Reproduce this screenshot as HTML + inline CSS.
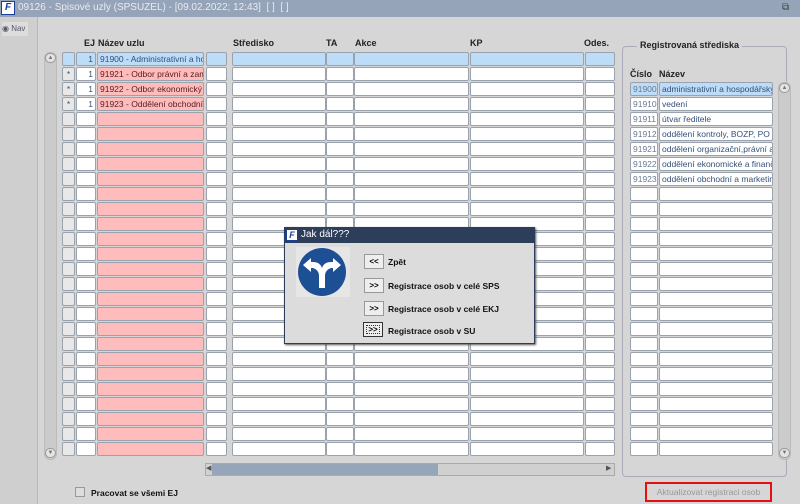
<!DOCTYPE html>
<html><head><meta charset="utf-8"><style>
*{margin:0;padding:0;box-sizing:border-box}
body{width:800px;height:504px;overflow:hidden;background:#d6d6d6;font-family:"Liberation Sans",sans-serif;font-size:9px;position:relative}
.a{position:absolute}
.c{position:absolute;height:14px;border:1px solid #9aa3ad;border-radius:2px;background:#fff;overflow:hidden;white-space:nowrap;line-height:12px;padding:0 2px;color:#34507a;font-size:8.5px}
.h{position:absolute;font-weight:bold;font-size:9px;color:#222}
.btn{position:absolute;width:20px;height:15px;border:1px solid #999;background:#eee;font-size:8px;text-align:center;line-height:13px;font-weight:bold}
.bl{position:absolute;font-weight:bold;font-size:8.5px;color:#111}
</style></head><body>
<div class="a" style="left:0;top:0;width:800px;height:17px;background:#95a4b8"></div>
<div class="a" style="left:1px;top:1px;width:14px;height:14px;background:#fff;border:1px solid #1a3f9a;color:#1a3f9a;font-size:10px;font-style:italic;font-weight:bold;line-height:12px;text-align:center">F</div>
<div class="a" style="left:18px;top:2px;color:#e8ecf2;font-size:10px">09126 - Spisové uzly (SPSUZEL) - [09.02.2022; 12:43]&nbsp; [ ]&nbsp; [ ]</div>
<div class="a" style="left:782px;top:2px;color:#444;font-size:10px">⧉</div>
<div class="a" style="left:0;top:17px;width:38px;height:487px;background:#cfcfcf;border-right:1px solid #b8b8b8"></div>
<div class="a" style="left:2px;top:22px;width:26px;height:14px;background:#ddd;font-size:8px;color:#556;line-height:14px">◉ Nav</div>

<div class="h" style="left:84px;top:38px">EJ</div>
<div class="h" style="left:98px;top:38px">Název uzlu</div>
<div class="h" style="left:233px;top:38px">Středisko</div>
<div class="h" style="left:326px;top:38px">TA</div>
<div class="h" style="left:355px;top:38px">Akce</div>
<div class="h" style="left:470px;top:38px">KP</div>
<div class="h" style="left:584px;top:38px">Odes.</div>

<div class="a" style="left:44px;top:52px;width:13px;height:408px;background:#cbcbcb;border:1px solid #bbb;border-radius:6px"></div>
<div class="a" style="left:45px;top:53px;width:11px;height:10px;border:1px solid #999;border-radius:5px;background:#e4e4e4;font-size:6px;text-align:center;color:#777;line-height:8px">▲</div>
<div class="a" style="left:45px;top:448px;width:11px;height:10px;border:1px solid #999;border-radius:5px;background:#e4e4e4;font-size:6px;text-align:center;color:#777;line-height:8px">▼</div>
<div id="g"></div>

<div class="a" style="left:205px;top:463px;width:410px;height:13px;background:#d0d0d0;border:1px solid #aaa"></div>
<div class="a" style="left:212px;top:464px;width:226px;height:11px;background:#96a5b8"></div>
<div class="a" style="left:206px;top:464px;font-size:7px;color:#555">◀</div>
<div class="a" style="left:606px;top:464px;font-size:7px;color:#555">▶</div>

<div class="a" style="left:622px;top:46px;width:165px;height:431px;border:1px solid #aab;border-radius:4px"></div>
<div class="a" style="left:637px;top:40px;padding:0 3px;background:#d6d6d6;font-weight:bold;font-size:9px;color:#222">Registrovaná střediska</div>
<div class="h" style="left:630px;top:69px">Číslo</div>
<div class="h" style="left:659px;top:69px">Název</div>
<div class="a" style="left:778px;top:82px;width:13px;height:378px;background:#cbcbcb;border:1px solid #bbb;border-radius:6px"></div>
<div class="a" style="left:779px;top:83px;width:11px;height:10px;border:1px solid #999;border-radius:5px;background:#e4e4e4;font-size:6px;text-align:center;color:#777;line-height:8px">▲</div>
<div class="a" style="left:779px;top:448px;width:11px;height:10px;border:1px solid #999;border-radius:5px;background:#e4e4e4;font-size:6px;text-align:center;color:#777;line-height:8px">▼</div>

<div class="a" style="left:75px;top:487px;width:10px;height:10px;border:1px solid #999;background:#ddd"></div>
<div class="bl" style="left:91px;top:488px">Pracovat se všemi EJ</div>
<div class="a" style="left:645px;top:482px;width:127px;height:20px;border:2px solid #e21010;background:#d6d6d6;color:#999;font-size:8.5px;text-align:center;line-height:16px">Aktualizovat registraci osob</div>

<div class="a" style="left:284px;top:227px;width:251px;height:117px;background:#dcdcdc;border:1px solid #2c3e5a;box-shadow:1px 1px 2px #555"></div>
<div class="a" style="left:285px;top:228px;width:249px;height:15px;background:#2c3e5a"></div>
<div class="a" style="left:286px;top:229px;width:12px;height:12px;background:#fff;border:1px solid #1a3f9a;color:#1a3f9a;font-size:9px;font-style:italic;font-weight:bold;line-height:10px;text-align:center">F</div>
<div class="a" style="left:301px;top:229px;color:#fff;font-size:10px">Jak dál???</div>
<div class="a" style="left:296px;top:247px;width:54px;height:50px;background:#e6e6e6"></div>
<svg class="a" style="left:298px;top:248px" width="50" height="50" viewBox="0 0 50 50"><circle cx="24" cy="24" r="24" fill="#1d4f95"/><path d="M21 40 V28 Q21 22 15 20 H13 V24 L5 17 L13 10 V14 H15 Q22 14 24 20 Q26 14 33 14 H35 V10 L43 17 L35 24 V20 H33 Q27 22 27 28 V40 Z" fill="#fff"/></svg>
<div class="btn" style="left:364px;top:254px">&lt;&lt;</div><div class="bl" style="left:388px;top:257px">Zpět</div>
<div class="btn" style="left:364px;top:278px">&gt;&gt;</div><div class="bl" style="left:388px;top:281px">Registrace osob v celé SPS</div>
<div class="btn" style="left:364px;top:301px">&gt;&gt;</div><div class="bl" style="left:388px;top:304px">Registrace osob v celé EKJ</div>
<div class="btn" style="left:363px;top:322px;border:1px solid #333;outline:1px dotted #333;outline-offset:-4px">&gt;&gt;</div><div class="bl" style="left:388px;top:326px">Registrace osob v SU</div>

<script>
var g='',L=[["1","91900 - Administrativní a hospodářský"],["1","91921 - Odbor právní a zaměstnanecký"],["1","91922 - Odbor ekonomický"],["1","91923 - Oddělení obchodní"]];
var cols=[[62,13],[76,20],[97,107],[206,21],[232,94],[326,28],[354,115],[470,114],[585,30]];
for(var i=0;i<27;i++){var y=52+15*i,sel=i==0;
cols.forEach(function(c,k){var bg=sel?'#bcdcf8':(k==0?'#e8e8e8':(k==2?'#ffbcbc':'#fff'));var t='';
if(i<4){if(k==0&&i>0)t='*';if(k==1)t=L[i][0];if(k==2)t=L[i][1];}
g+='<div class="c" style="left:'+c[0]+'px;top:'+y+'px;width:'+c[1]+'px;background:'+bg+';'+(k<2?'text-align:'+(k==0?'center':'right')+';':'')+(k==2&&!sel?'color:#5a1a1a;':'')+'">'+t+'</div>';});}
var R=[["91900","administrativní a hospodářský"],["91910","vedení"],["91911","útvar ředitele"],["91912","oddělení kontroly, BOZP, PO a"],["91921","oddělení organizační,právní a"],["91922","oddělení ekonomické a finanční"],["91923","oddělení obchodní a marketingu"]];
for(var i=0;i<25;i++){var y=82+15*i,bg=i==0?'#bcdcf8':'#fff',r=R[i]||['',''];
g+='<div class="c" style="left:630px;top:'+y+'px;width:28px;background:'+bg+';color:#6a7890">'+r[0]+'</div>';
g+='<div class="c" style="left:659px;top:'+y+'px;width:114px;background:'+bg+'">'+r[1]+'</div>';}
document.getElementById('g').innerHTML=g;
</script>
</body></html>
